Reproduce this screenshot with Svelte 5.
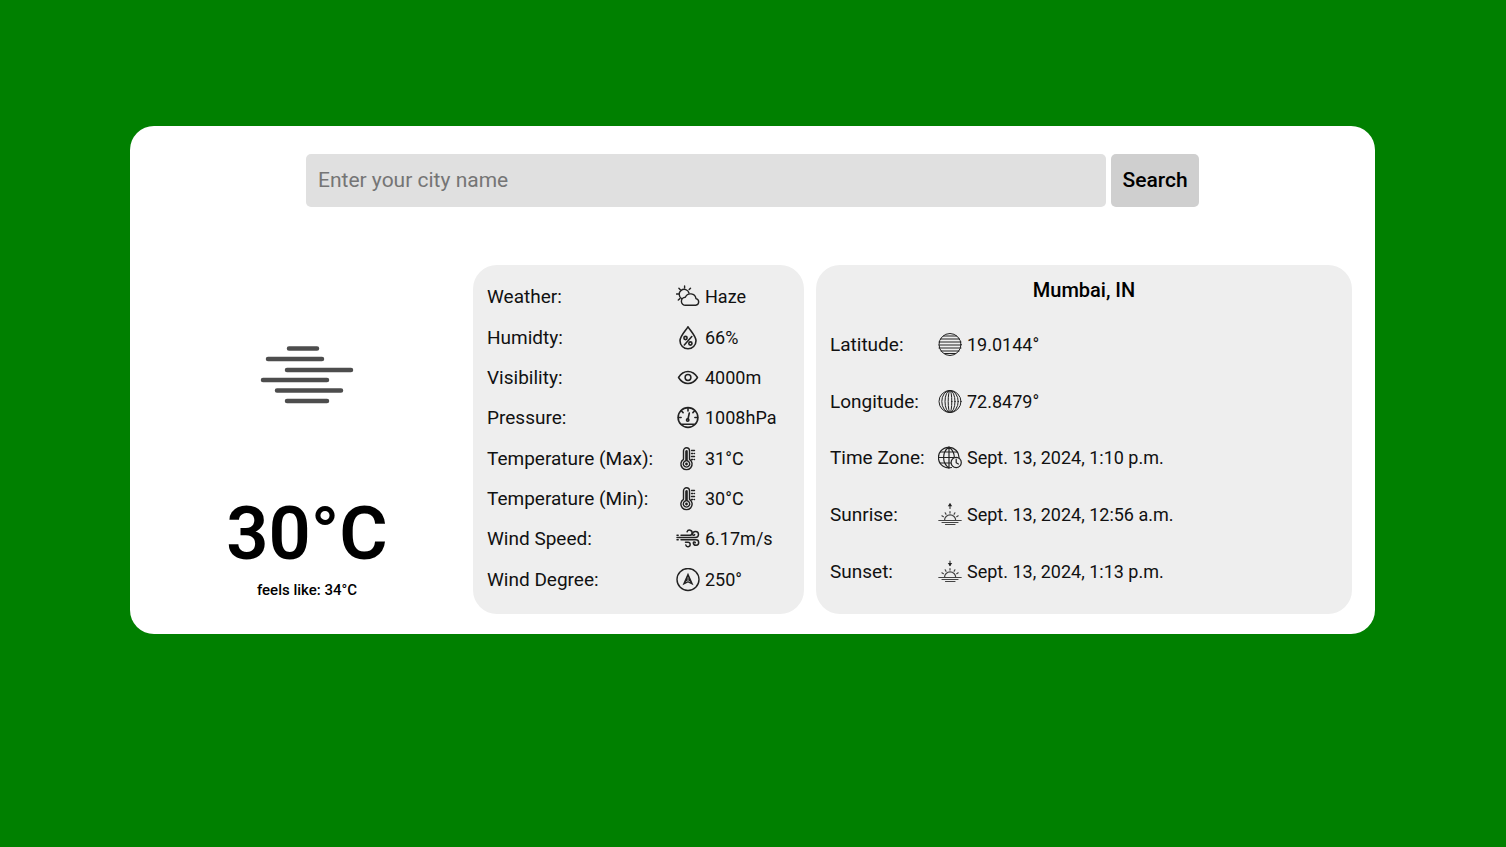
<script>
  let city = $state('');

  const conditions = [
    { label: 'Weather:', icon: 'cloud', value: 'Haze' },
    { label: 'Humidty:', icon: 'drop', value: '66%' },
    { label: 'Visibility:', icon: 'eye', value: '4000m' },
    { label: 'Pressure:', icon: 'gauge', value: '1008hPa' },
    { label: 'Temperature (Max):', icon: 'thermometer', value: '31°C' },
    { label: 'Temperature (Min):', icon: 'thermometer', value: '30°C' },
    { label: 'Wind Speed:', icon: 'wind', value: '6.17m/s' },
    { label: 'Wind Degree:', icon: 'compass', value: '250°' }
  ];

  const place = [
    { label: 'Latitude:', icon: 'latitude', value: '19.0144°' },
    { label: 'Longitude:', icon: 'longitude', value: '72.8479°' },
    { label: 'Time Zone:', icon: 'timezone', value: 'Sept. 13, 2024, 1:10 p.m.' },
    { label: 'Sunrise:', icon: 'sunrise', value: 'Sept. 13, 2024, 12:56 a.m.' },
    { label: 'Sunset:', icon: 'sunset', value: 'Sept. 13, 2024, 1:13 p.m.' }
  ];
</script>

{#snippet glyph(name)}
  <svg class="icon" viewBox="0 0 24 24" aria-hidden="true">
    {#if name === 'cloud'}
      <g stroke-width="1.4">
        <path d="M9.500 20.300a4 4 0 0 1-.2-8 5.600 5.600 0 0 1 10.700 1.300 3.400 3.400 0 0 1-.3 6.700z" />
        <path d="M5.600 13.600A5 5 0 1 1 13 8" />
        <path d="M8.600 1v2M2.900 3.200l1.400 1.500M14.500 3.200l-1.300 1.400M.6 9h2M2.300 15l1.600-1.400" />
      </g>
    {:else if name === 'drop'}
      <g stroke-width="1.6">
        <path d="M12 .8C9.500 4.800 4 10 4 14.800a8 8 0 0 0 16 0C20 10 14.500 4.800 12 .8z" />
        <path d="M8.300 19l7.500-8.500" />
        <circle cx="9.500" cy="12" r="1.600" />
        <circle cx="14.400" cy="17.500" r="1.600" />
      </g>
    {:else if name === 'eye'}
      <g stroke-width="1.5">
        <path d="M2.500 11.500C5 7.500 8.300 5.500 12 5.500s7 2 9.500 6c-2.500 4-5.800 6-9.500 6s-7-2-9.500-6z" />
        <circle cx="12" cy="11.500" r="2.900" />
      </g>
    {:else if name === 'gauge'}
      <g stroke-width="1.6">
        <circle cx="12" cy="11.500" r="9.900" />
        <path d="M5.500 18.300h13" />
        <path d="M12 2v3M5.300 4.800l1.800 1.800M18.700 4.800l-1.800 1.800M2.500 11.500h2.600M21.500 11.500h-2.600M13.300 7L12 13" />
        <circle cx="11.700" cy="14" r="1.200" />
      </g>
    {:else if name === 'thermometer'}
      <g stroke-width="1.4">
        <path d="M7.500 12.300V3.800a3 3 0 0 1 6 0v8.500a5.600 5.600 0 1 1-6 0z" />
        <path d="M9.900 13.800V4.300a.6.600 0 0 1 1.200 0v9.500a3.200 3.200 0 1 1-1.200 0z" />
        <circle cx="10.500" cy="17" r=".7" />
        <path d="M15.500 3.500h3M15.500 6.500h1.200M18.200 6.500h.3M15.500 9.500h3M15.500 12.500h1.200M18.200 12.500h.3" />
      </g>
    {:else if name === 'wind'}
      <g stroke-width="1.5">
        <path d="M5 8.300h8.500a2.600 2.600 0 1 0-2.400-3.500" />
        <path d="M1 8.300h1.200M1 12.800h1.200" />
        <path d="M1 10.500h18.500a3 3 0 1 0-3-3.200c0 1.200 1.800 1.300 2.200.3" />
        <path d="M5 12.800h15a2.700 2.700 0 1 1-2.700 3c.1-1 1.700-1 2 0" />
        <path d="M9.500 15.300h2.500a2.200 2.200 0 1 1-2.200 2.600" />
      </g>
    {:else if name === 'compass'}
      <circle cx="12" cy="11.500" r="11" stroke-width="1.4" />
      <path class="solid" d="M12 4.800L6.500 17.300l5.500-2.700 5.500 2.700z" />
      <path class="cut" d="M12 9.500V13M10.200 13.700l1.800-1 1.800 1" />
    {:else if name === 'latitude'}
      <g stroke-width="1">
        <circle cx="12" cy="11.500" r="11" />
        <path d="M5.500 3h13M2.500 6h19M1 9h22M1 12h22M1 15h22M3 18h18M6.500 20.500h11" />
      </g>
    {:else if name === 'longitude'}
      <g stroke-width="1">
        <circle cx="12" cy="11.500" r="11" />
        <ellipse cx="12" cy="11.500" rx="8.200" ry="11" />
        <ellipse cx="12" cy="11.500" rx="5" ry="11" />
        <ellipse cx="12" cy="11.500" rx="1.800" ry="11" />
      </g>
    {:else if name === 'timezone'}
      <g stroke-width="1.2">
        <path d="M13.500 21.500a10.300 10.300 0 1 1 7.500-9" />
        <path d="M11 1v21M1 11.500h15M2.500 6h17M2.500 17h10M11 1C3.800 6 3.800 17 11 22M11 1c3.800 3 5.300 6.500 5.300 10.300" />
        <circle class="plate" cx="18.200" cy="16.500" r="5.100" />
        <path d="M18.200 13.200v3.500l2.200 1.300" />
      </g>
    {:else}
      <g class="horizon" stroke-width="1.2">
        <path d="M6.500 17.500a5.600 5.600 0 0 1 11.200 0" />
        <path d="M12 8.500v1.600M7.200 9.800l.8 1.500M16.900 9.800l-.8 1.500M3.900 12.800l1.500.9M20.200 12.800l-1.500.9" />
        <path d="M.8 17.500h22.400M4 19.500h16M7.500 21.500h9.500" />
        <path d="M12 1v4.500" />
        {#if name === 'sunrise'}
          <path class="head" d="M12 0l2.200 3.200H9.800z" />
        {:else}
          <path class="head" d="M12 6.200L14.200 3H9.800z" />
        {/if}
      </g>
    {/if}
  </svg>
{/snippet}

{#snippet facts(rows)}
  <dl>
    {#each rows as row}
      <div class="row">
        <dt>{row.label}</dt>
        <dd>{@render glyph(row.icon)}<span>{row.value}</span></dd>
      </div>
    {/each}
  </dl>
{/snippet}

<main>
  <form onsubmit={(event) => event.preventDefault()}>
    <input type="text" aria-label="City name" placeholder="Enter your city name" bind:value={city} />
    <button type="submit">Search</button>
  </form>

  <div class="report">
    <section class="now">
      <svg class="haze" viewBox="0 0 94 60" aria-hidden="true">
        <path d="M29 3.500h28M8 14h54M27 25h64M3 35h64M17 45.500h64M27 56h40" />
      </svg>
      <p class="degrees">30°C</p>
      <p class="feels">feels like: 34°C</p>
    </section>

    <section class="panel conditions">
      {@render facts(conditions)}
    </section>

    <section class="panel place">
      <h1>Mumbai, IN</h1>
      {@render facts(place)}
    </section>
  </div>
</main>

<style>
  :global(body) {
    background: #008000;
  }

  main {
    box-sizing: border-box;
    margin: 126px 131px 126px 130px;
    padding: 28px 23px 20px;
    border-radius: 24px;
    background: #fff;
    color: #111;
    font-family: Roboto, "Liberation Sans", sans-serif;
    font-size: 19px;
    line-height: 24px;
  }

  form {
    display: flex;
    justify-content: center;
    gap: 5px;
    margin-bottom: 58px;
  }

  input,
  button {
    box-sizing: border-box;
    height: 53px;
    padding: 0 12px 2px;
    border: 0;
    border-radius: 5px;
    font-family: inherit;
    font-size: 21px;
    color: #000;
  }

  input {
    flex: 0 1 800px;
    min-width: 0;
    background: #e0e0e0;
  }

  input::placeholder {
    color: #757575;
  }

  button {
    flex: 0 0 88px;
    padding: 0 0 2px;
    background: #cfcfcf;
    font-weight: 500;
    cursor: pointer;
  }

  .report {
    display: grid;
    grid-template-columns: 308fr 331fr 536fr;
    gap: 12px;
    min-height: 349px;
  }

  .now {
    display: flex;
    flex-direction: column;
    align-items: center;
    justify-content: flex-end;
    padding-bottom: 12px;
    color: #000;
  }

  .haze {
    width: 94px;
    height: 60px;
    margin-bottom: 85px;
    fill: none;
    stroke: #4d4d4d;
    stroke-width: 4.5;
    stroke-linecap: round;
  }

  p,
  h1,
  dl,
  dd {
    margin: 0;
  }

  .degrees {
    font-size: 74px;
    font-weight: 600;
    line-height: 88px;
  }

  .feels {
    font-size: 15px;
    font-weight: 500;
  }

  .panel {
    display: flex;
    flex-direction: column;
    padding: 12px 14px 14px;
    border-radius: 24px;
    background: #eee;
  }

  h1 {
    height: 40px;
    font-size: 20px;
    font-weight: 500;
    line-height: 26px;
    text-align: center;
    color: #000;
  }

  dl {
    display: flex;
    flex: 1;
    flex-direction: column;
  }

  .row {
    display: flex;
    flex: 1;
    align-items: center;
    min-height: 40px;
  }

  .place .row {
    min-height: 56px;
  }

  dt {
    flex: none;
    width: 189px;
  }

  .place dt {
    width: 108px;
  }

  dd {
    display: flex;
    align-items: center;
    gap: 5px;
    font-size: 18px;
    white-space: nowrap;
  }

  .icon {
    flex: none;
    width: 24px;
    height: 24px;
    fill: none;
    stroke: #222;
    stroke-linecap: round;
    stroke-linejoin: round;
  }

  .horizon {
    stroke: #444;
  }

  .solid,
  .head {
    fill: #222;
    stroke: none;
  }

  .cut {
    stroke: #999;
    stroke-width: 1;
  }

  .plate {
    fill: #eee;
  }
</style>
